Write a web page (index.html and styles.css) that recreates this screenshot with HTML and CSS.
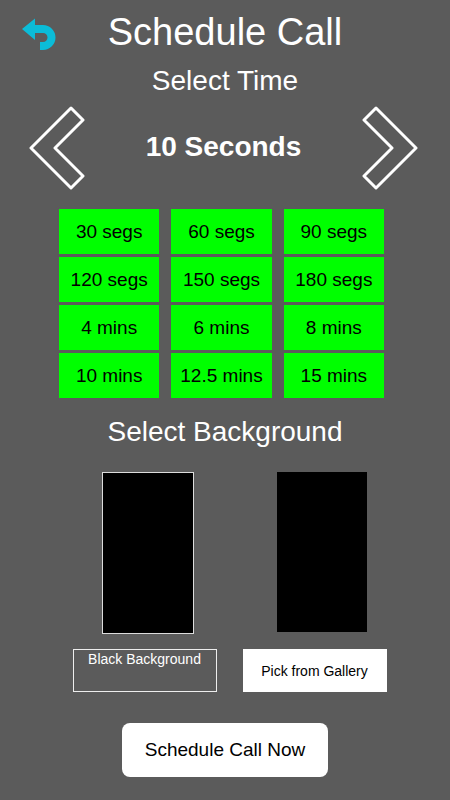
FILE: index.html
```html
<!DOCTYPE html>
<html lang="en">
<head>
<meta charset="utf-8">
<meta name="viewport" content="width=device-width, initial-scale=1">
<title>Schedule Call</title>
<link rel="stylesheet" href="styles.css">
</head>
<body>
<header class="top">
  <button class="icon-button" type="button" aria-label="Back">
    <svg width="36" height="36" viewBox="0 0 36 36"><path fill="#0bbcd8" d="M1 11 14 0.500V7H22A12.500 12.500 0 0 1 22 32H19V24H22A4.500 4.500 0 0 0 22 15H14V22Z"/></svg>
  </button>
  <h1>Schedule Call</h1>
</header>
<main>
  <h2>Select Time</h2>
  <div class="picker">
    <button class="icon-button" type="button" aria-label="Previous time">
      <svg width="56" height="84" viewBox="0 0 56 84"><path class="arrow" d="M42 2 54 14 26 42 54 70 42 82 2 42Z"/></svg>
    </button>
    <output>10 Seconds</output>
    <button class="icon-button" type="button" aria-label="Next time">
      <svg width="56" height="84" viewBox="0 0 56 84"><path class="arrow" d="M14 2 2 14 30 42 2 70 14 82 54 42Z"/></svg>
    </button>
  </div>
  <div class="times">
    <button type="button">30 segs</button>
    <button type="button">60 segs</button>
    <button type="button">90 segs</button>
    <button type="button">120 segs</button>
    <button type="button">150 segs</button>
    <button type="button">180 segs</button>
    <button type="button">4 mins</button>
    <button type="button">6 mins</button>
    <button type="button">8 mins</button>
    <button type="button">10 mins</button>
    <button type="button">12.5 mins</button>
    <button type="button">15 mins</button>
  </div>
  <h2>Select Background</h2>
  <div class="previews">
    <div class="preview selected"></div>
    <div class="preview"></div>
  </div>
  <div class="choices">
    <button class="choice outlined" type="button">Black Background</button>
    <button class="choice" type="button">Pick from Gallery</button>
  </div>
  <button class="submit" type="button">Schedule Call Now</button>
</main>
</body>
</html>
```
FILE: styles.css
```css
* {
  box-sizing: border-box;
}

body {
  margin: 0;
  background: #5b5b5b;
  color: #fff;
  font-family: "Liberation Sans", Arial, sans-serif;
}

button {
  padding: 0;
  border: 0;
  color: #000;
  font-family: inherit;
  cursor: pointer;
}

svg {
  display: block;
}

h1,
h2 {
  margin: 0;
  font-weight: 400;
  text-align: center;
}

h1 {
  font-size: 38px;
  line-height: 44px;
}

h2 {
  font-size: 28px;
  line-height: 32px;
}

.top {
  display: grid;
  grid-template-columns: 36px 1fr 36px;
  align-items: end;
  padding: 10px 21px 0;
}

.icon-button {
  background: none;
}

main {
  display: flex;
  flex-direction: column;
  padding-top: 11px;
}

.picker {
  display: flex;
  align-items: center;
  justify-content: space-between;
  padding: 9px 32px 0 29px;
}

.picker output {
  padding-bottom: 2px;
  font-size: 28px;
  font-weight: 700;
  line-height: 32px;
}

.arrow {
  fill: none;
  stroke: #fff;
  stroke-width: 3;
  stroke-linejoin: round;
}

.times {
  display: grid;
  grid-template-columns: repeat(3, 1fr);
  grid-auto-rows: 45px;
  gap: 3px 12px;
  margin: 19px 66px 18px 59px;
}

.times button {
  background: #0f0;
  font-size: 19px;
}

.previews {
  display: flex;
  justify-content: center;
  gap: 83px;
  margin-top: 24px;
  padding-left: 19px;
}

.preview {
  box-sizing: content-box;
  width: 90px;
  height: 160px;
  background: #000;
}

.selected {
  border: 1px solid #ddd;
}

.choices {
  display: flex;
  justify-content: center;
  gap: 26px;
  margin-top: 15px;
  padding-left: 9px;
}

.choice {
  width: 144px;
  height: 43px;
  background: #fff;
  font-size: 14px;
}

.outlined {
  display: flex;
  justify-content: center;
  padding-top: 1px;
  border: 1px solid #eee;
  background: none;
  color: #fff;
}

.submit {
  align-self: center;
  width: 206px;
  height: 54px;
  margin: 31px 0 23px;
  border-radius: 8px;
  background: #fff;
  font-size: 19px;
}
```
